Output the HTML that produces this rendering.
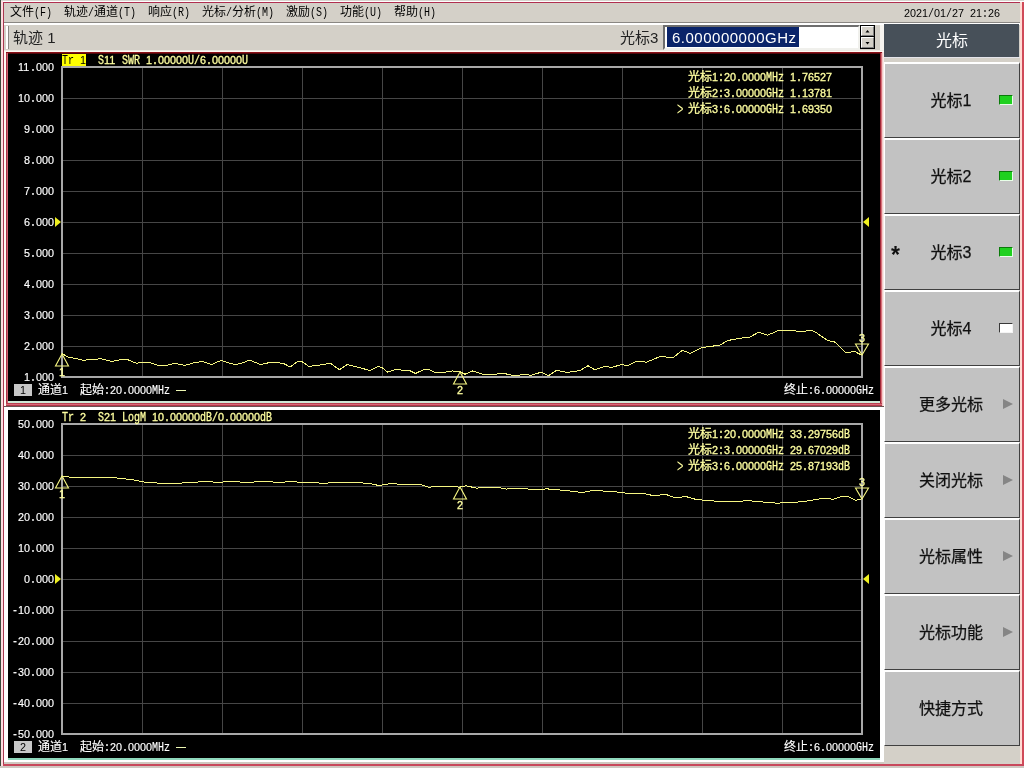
<!DOCTYPE html>
<html lang="zh-CN"><head><meta charset="utf-8"><title>光标</title>
<style>
html,body{margin:0;padding:0}
body{width:1024px;height:768px;overflow:hidden;background:#d4d0c8;position:relative;will-change:transform;font-family:"Liberation Sans","Noto Sans CJK SC",sans-serif}
.t{position:absolute;height:12px;line-height:12px;font-size:12px;white-space:pre;-webkit-text-stroke:.3px}
.t.k{-webkit-text-stroke:0}
.t.w{-webkit-text-stroke:.15px}
.t span{display:inline-block;position:relative;height:12px;line-height:12px;vertical-align:top;white-space:pre}
.t .c{font-family:"Liberation Sans","Noto Sans CJK SC",sans-serif;font-size:12px}
.t .l{font-family:"Liberation Mono","DejaVu Sans Mono",monospace;font-size:12px;transform:scaleX(.8333);transform-origin:0 0;top:1px}
.t .d{font-family:"Liberation Sans","DejaVu Sans",sans-serif;font-size:10.79px}
.btn{position:absolute;left:884px;width:136px;height:76px;background:#c2c2c2;box-sizing:border-box;border-top:2px solid #fff;border-left:1px solid #fff;border-bottom:1px solid #404040;border-right:1px solid #404040;font-size:16px;color:#101010;text-align:center;line-height:73px;padding-right:2px;-webkit-text-stroke:.25px}
.btn b{position:absolute;font-weight:normal}
.gt{position:absolute;width:7px;height:12px;line-height:12px;font-size:12px;font-family:"Liberation Sans",sans-serif;transform:scale(.9,1.5);transform-origin:0 50%}
.led{position:absolute;left:114px;top:31px;width:14px;height:10px;box-sizing:border-box;border:1px solid;border-color:#0a7a0a #e8ffe8 #e8ffe8 #0a7a0a;background:#1fd01f}
.arr{position:absolute;left:118px;top:31px;width:0;height:0;border-left:10px solid #858585;border-top:5px solid transparent;border-bottom:5px solid transparent}
</style></head><body>

<div style="position:absolute;left:0px;top:0px;width:1024px;height:1px;background:#d8d6d0;"></div>
<div style="position:absolute;left:0px;top:1px;width:1024px;height:1px;background:#fff;"></div>
<div style="position:absolute;left:0px;top:0px;width:1px;height:768px;background:#3a4a3a;"></div>
<div style="position:absolute;left:1px;top:1px;width:2px;height:767px;background:#ffdce0;"></div>
<div style="position:absolute;left:3px;top:2px;width:1px;height:764px;background:#a83850;"></div>
<div style="position:absolute;left:3px;top:2px;width:1019px;height:1px;background:#b03050;"></div>
<div style="position:absolute;left:1020px;top:2px;width:2px;height:764px;background:#ffdcd4;"></div>
<div style="position:absolute;left:1022px;top:2px;width:2px;height:766px;background:#d04a58;"></div>
<div style="position:absolute;left:3px;top:764px;width:1021px;height:2px;background:#c8485c;"></div>
<div style="position:absolute;left:0px;top:766px;width:1024px;height:2px;background:#cfc8c2;"></div>
<div class="t k" style="left:10px;top:6px;color:#000"><span class="c" style="width:24px">文件</span><span class="l" style="width:18px">(F)</span></div>
<div class="t k" style="left:64px;top:6px;color:#000"><span class="c" style="width:24px">轨迹</span><span class="l" style="width:6px">/</span><span class="c" style="width:24px">通道</span><span class="l" style="width:18px">(T)</span></div>
<div class="t k" style="left:148px;top:6px;color:#000"><span class="c" style="width:24px">响应</span><span class="l" style="width:18px">(R)</span></div>
<div class="t k" style="left:202px;top:6px;color:#000"><span class="c" style="width:24px">光标</span><span class="l" style="width:6px">/</span><span class="c" style="width:24px">分析</span><span class="l" style="width:18px">(M)</span></div>
<div class="t k" style="left:286px;top:6px;color:#000"><span class="c" style="width:24px">激励</span><span class="l" style="width:18px">(S)</span></div>
<div class="t k" style="left:340px;top:6px;color:#000"><span class="c" style="width:24px">功能</span><span class="l" style="width:18px">(U)</span></div>
<div class="t k" style="left:394px;top:6px;color:#000"><span class="c" style="width:24px">帮助</span><span class="l" style="width:18px">(H)</span></div>
<div class="t k" style="left:904px;top:7px;color:#000"><span class="d" style="width:24px">2021</span><span class="l" style="width:6px">/</span><span class="d" style="width:12px">01</span><span class="l" style="width:6px">/</span><span class="d" style="width:12px">27</span><span class="l" style="width:6px"> </span><span class="d" style="width:12px">21</span><span class="l" style="width:6px">:</span><span class="d" style="width:12px">26</span></div>
<div style="position:absolute;left:4px;top:22px;width:1016px;height:1px;background:#8a8783;"></div>
<div style="position:absolute;left:4px;top:23px;width:1016px;height:2px;background:#fff;"></div>
<div style="position:absolute;left:6px;top:26px;width:2px;height:23px;background:#fff;"></div>
<div style="position:absolute;left:8px;top:26px;width:1px;height:23px;background:#8a8783;"></div>
<div style="position:absolute;left:13px;top:28px;font-size:15px;line-height:20px;color:#222;white-space:nowrap">轨迹 1</div>
<div style="position:absolute;left:620px;top:28px;font-size:15px;line-height:20px;color:#222;white-space:nowrap">光标3</div>
<div style="position:absolute;left:663px;top:25px;width:197px;height:25px;box-sizing:border-box;background:#fff;border:2px solid;border-color:#6e6e6e #f0f0ec #f0f0ec #6e6e6e"></div>
<div style="position:absolute;left:667px;top:27px;width:132px;height:20px;background:#0a246a;color:#fff;font-size:15px;line-height:22px;letter-spacing:.5px;white-space:nowrap;text-indent:5px">6.000000000GHz</div>
<div style="position:absolute;left:860px;top:25px;width:15px;height:24px;background:#000;"></div>
<div style="position:absolute;left:861px;top:26px;width:13px;height:10px;background:#d4d0c8;box-sizing:border-box;border-top:1px solid #fff;border-left:1px solid #fff;border-right:1px solid #808080;border-bottom:1px solid #808080"></div>
<div style="position:absolute;left:861px;top:37px;width:13px;height:11px;background:#d4d0c8;box-sizing:border-box;border-top:1px solid #fff;border-left:1px solid #fff;border-right:1px solid #808080;border-bottom:1px solid #808080"></div>
<svg style="position:absolute;left:860px;top:25px" width="15" height="24"><polygon points="5.5,7.5 9.5,7.5 7.5,5" fill="#000"/><polygon points="5.5,17 9.5,17 7.5,19.5" fill="#000"/></svg>
<div style="position:absolute;left:880px;top:25px;width:4px;height:27px;background:#f6f4f0;"></div>
<div style="position:absolute;left:4px;top:50px;width:880px;height:1px;background:#ecebe4;"></div>
<div style="position:absolute;left:4px;top:51px;width:880px;height:356px;background:#fffaf4;"></div>
<div style="position:absolute;left:6px;top:52px;width:876px;height:354px;background:#c03a4c;"></div>
<div style="position:absolute;left:6px;top:52px;width:1px;height:354px;background:#a83848;"></div>
<div style="position:absolute;left:7px;top:52px;width:1px;height:354px;background:#d06070;"></div>
<div style="position:absolute;left:880px;top:52px;width:1px;height:354px;background:#a02838;"></div>
<div style="position:absolute;left:881px;top:52px;width:1px;height:354px;background:#d87078;"></div>
<div style="position:absolute;left:882px;top:52px;width:1px;height:354px;background:#f4c8c8;"></div>
<div style="position:absolute;left:883px;top:52px;width:1px;height:354px;background:#f8e8e4;"></div>
<div style="position:absolute;left:6px;top:52px;width:876px;height:1px;background:#8a1018;"></div>
<div style="position:absolute;left:8px;top:53px;width:872px;height:1px;background:#50080c;"></div>
<div style="position:absolute;left:8px;top:54px;width:872px;height:349px;background:#cfe8d6;"></div>
<div style="position:absolute;left:6px;top:403px;width:876px;height:1px;background:#b84050;"></div>
<div style="position:absolute;left:6px;top:404px;width:876px;height:1px;background:#d86878;"></div>
<div style="position:absolute;left:6px;top:405px;width:876px;height:1px;background:#b03848;"></div>
<div style="position:absolute;left:4px;top:406px;width:880px;height:1px;background:#6a5050;"></div>
<div style="position:absolute;left:4px;top:407px;width:880px;height:355px;background:#fff;"></div>
<div style="position:absolute;left:8px;top:410px;width:872px;height:350px;background:#8fd8bc;"></div>
<div style="position:absolute;left:4px;top:762px;width:880px;height:2px;background:#cfc8c0;"></div>
<div style="position:absolute;left:8px;top:54px;width:872px;height:347px;background:#000"></div>
<svg style="position:absolute;left:8px;top:54px" width="872" height="347" viewBox="8 54 872 347">
<rect x="142" y="67" width="1" height="310" fill="#464646"/>
<rect x="62" y="98" width="800" height="1" fill="#464646"/>
<rect x="222" y="67" width="1" height="310" fill="#464646"/>
<rect x="62" y="129" width="800" height="1" fill="#464646"/>
<rect x="302" y="67" width="1" height="310" fill="#464646"/>
<rect x="62" y="160" width="800" height="1" fill="#464646"/>
<rect x="382" y="67" width="1" height="310" fill="#464646"/>
<rect x="62" y="191" width="800" height="1" fill="#464646"/>
<rect x="462" y="67" width="1" height="310" fill="#464646"/>
<rect x="62" y="222" width="800" height="1" fill="#464646"/>
<rect x="542" y="67" width="1" height="310" fill="#464646"/>
<rect x="62" y="253" width="800" height="1" fill="#464646"/>
<rect x="622" y="67" width="1" height="310" fill="#464646"/>
<rect x="62" y="284" width="800" height="1" fill="#464646"/>
<rect x="702" y="67" width="1" height="310" fill="#464646"/>
<rect x="62" y="315" width="800" height="1" fill="#464646"/>
<rect x="782" y="67" width="1" height="310" fill="#464646"/>
<rect x="62" y="346" width="800" height="1" fill="#464646"/>
<rect x="62" y="67" width="800" height="310" fill="none" stroke="#a8a8a8" stroke-width="2"/>
<polyline points="62.2,353.7 69.0,357.7 75.4,358.2 83.0,360.3 91.9,359.5 100.8,358.8 112.2,361.5 119.8,359.8 126.2,359.0 136.3,363.3 142.7,362.0 150.3,362.6 159.2,365.9 166.8,365.4 174.4,363.3 184.6,365.4 194.7,362.6 202.4,361.5 211.3,364.6 221.4,360.3 227.8,362.6 235.4,364.6 241.7,363.3 249.3,360.0 253.1,361.5 260.8,364.6 268.4,362.8 278.5,362.6 284.9,364.1 290.0,367.1 297.6,361.5 302.5,362.0 308.9,366.4 317.8,365.4 330.5,363.3 339.4,369.7 347.0,364.6 354.6,366.4 369.8,370.4 378.7,366.4 382.5,367.9 387.6,372.2 395.2,369.7 409.2,370.4 415.5,373.5 424.4,369.2 429.5,369.7 435.9,373.0 444.7,372.2 452.4,370.9 460.0,371.7 465.0,374.2 472.7,370.9 482.8,374.2 493.0,374.8 501.9,373.0 515.8,376.0 523.5,374.2 531.0,375.3 541.2,372.2 548.3,375.7 556.6,370.4 566.6,372.4 579.8,370.7 588.1,365.7 594.8,369.7 604.7,366.4 611.4,367.4 621.3,364.7 628.0,365.4 636.3,361.4 646.5,362.1 661.1,356.2 672.8,358.0 682.2,350.3 690.4,353.4 702.1,347.5 719.7,345.2 727.9,340.5 740.8,338.1 750.1,337.0 758.4,332.3 767.7,335.1 778.3,330.6 790.0,330.4 801.7,331.6 811.1,330.2 815.8,332.3 827.5,340.5 834.5,341.8 846.2,353.0 854.4,351.2 861.5,355.2" fill="none" stroke="#f6f682" stroke-width="1" shape-rendering="crispEdges"/>
<polygon points="55,217 61,222 55,227" fill="#f0f020"/>
<polygon points="869,217 863,222 869,227" fill="#f0f020"/>
<polygon points="62,354 55.5,366 68.5,366" fill="none" stroke="#f6f682" stroke-width="1.1"/>
<polygon points="460,372 453.5,384 466.5,384" fill="none" stroke="#f6f682" stroke-width="1.1"/>
<polygon points="862,355 855.5,344 868.5,344" fill="none" stroke="#f6f682" stroke-width="1.1"/>
</svg>
<div class="t " style="left:59px;top:366px;color:#ffffa0"><span class="d" style="width:6px">1</span></div>
<div class="t " style="left:457px;top:384px;color:#ffffa0"><span class="d" style="width:6px">2</span></div>
<div class="t " style="left:859px;top:332px;color:#ffffa0"><span class="d" style="width:6px">3</span></div>
<div style="position:absolute;left:62px;top:54px;width:24px;height:12px;background:#ffff00;"></div>
<div class="t k" style="left:62px;top:54px;color:#000"><span class="l" style="width:18px">Tr </span><span class="d" style="width:6px">1</span></div>
<div class="t " style="left:98px;top:54px;color:#ffffa0"><span class="l" style="width:6px">S</span><span class="d" style="width:12px">11</span><span class="l" style="width:30px"> SWR </span><span class="d" style="width:6px">1</span><span class="l" style="width:6px">.</span><span class="d" style="width:30px">00000</span><span class="l" style="width:12px">U/</span><span class="d" style="width:6px">6</span><span class="l" style="width:6px">.</span><span class="d" style="width:30px">00000</span><span class="l" style="width:6px">U</span></div>
<div class="t w" style="left:18px;top:61px;color:#fff"><span class="d" style="width:12px">11</span><span class="l" style="width:6px">.</span><span class="d" style="width:18px">000</span></div>
<div class="t w" style="left:18px;top:92px;color:#fff"><span class="d" style="width:12px">10</span><span class="l" style="width:6px">.</span><span class="d" style="width:18px">000</span></div>
<div class="t w" style="left:24px;top:123px;color:#fff"><span class="d" style="width:6px">9</span><span class="l" style="width:6px">.</span><span class="d" style="width:18px">000</span></div>
<div class="t w" style="left:24px;top:154px;color:#fff"><span class="d" style="width:6px">8</span><span class="l" style="width:6px">.</span><span class="d" style="width:18px">000</span></div>
<div class="t w" style="left:24px;top:185px;color:#fff"><span class="d" style="width:6px">7</span><span class="l" style="width:6px">.</span><span class="d" style="width:18px">000</span></div>
<div class="t w" style="left:24px;top:216px;color:#fff"><span class="d" style="width:6px">6</span><span class="l" style="width:6px">.</span><span class="d" style="width:18px">000</span></div>
<div class="t w" style="left:24px;top:247px;color:#fff"><span class="d" style="width:6px">5</span><span class="l" style="width:6px">.</span><span class="d" style="width:18px">000</span></div>
<div class="t w" style="left:24px;top:278px;color:#fff"><span class="d" style="width:6px">4</span><span class="l" style="width:6px">.</span><span class="d" style="width:18px">000</span></div>
<div class="t w" style="left:24px;top:309px;color:#fff"><span class="d" style="width:6px">3</span><span class="l" style="width:6px">.</span><span class="d" style="width:18px">000</span></div>
<div class="t w" style="left:24px;top:340px;color:#fff"><span class="d" style="width:6px">2</span><span class="l" style="width:6px">.</span><span class="d" style="width:18px">000</span></div>
<div class="t w" style="left:24px;top:371px;color:#fff"><span class="d" style="width:6px">1</span><span class="l" style="width:6px">.</span><span class="d" style="width:18px">000</span></div>
<div class="t " style="left:688px;top:71px;color:#ffffa0"><span class="c" style="width:24px">光标</span><span class="d" style="width:6px">1</span><span class="l" style="width:6px">:</span><span class="d" style="width:12px">20</span><span class="l" style="width:6px">.</span><span class="d" style="width:24px">0000</span><span class="l" style="width:24px">MHz </span><span class="d" style="width:6px">1</span><span class="l" style="width:6px">.</span><span class="d" style="width:30px">76527</span></div>
<div class="t " style="left:688px;top:87px;color:#ffffa0"><span class="c" style="width:24px">光标</span><span class="d" style="width:6px">2</span><span class="l" style="width:6px">:</span><span class="d" style="width:6px">3</span><span class="l" style="width:6px">.</span><span class="d" style="width:30px">00000</span><span class="l" style="width:24px">GHz </span><span class="d" style="width:6px">1</span><span class="l" style="width:6px">.</span><span class="d" style="width:30px">13781</span></div>
<div class="gt" style="left:677px;top:103px;color:#ffffa0">&gt;</div>
<div class="t " style="left:688px;top:103px;color:#ffffa0"><span class="c" style="width:24px">光标</span><span class="d" style="width:6px">3</span><span class="l" style="width:6px">:</span><span class="d" style="width:6px">6</span><span class="l" style="width:6px">.</span><span class="d" style="width:30px">00000</span><span class="l" style="width:24px">GHz </span><span class="d" style="width:6px">1</span><span class="l" style="width:6px">.</span><span class="d" style="width:30px">69350</span></div>
<div style="position:absolute;left:14px;top:384px;width:18px;height:12px;background:#c8c8c8;"></div>
<div class="t k" style="left:20px;top:384px;color:#000"><span class="d" style="width:6px">1</span></div>
<div class="t w" style="left:38px;top:384px;color:#fff"><span class="c" style="width:24px">通道</span><span class="d" style="width:6px">1</span><span class="l" style="width:12px">  </span><span class="c" style="width:24px">起始</span><span class="l" style="width:6px">:</span><span class="d" style="width:12px">20</span><span class="l" style="width:6px">.</span><span class="d" style="width:24px">0000</span><span class="l" style="width:18px">MHz</span></div>
<div style="position:absolute;left:176px;top:390px;width:10px;height:1px;background:#eef8b4;"></div>
<div class="t w" style="left:784px;top:384px;color:#fff"><span class="c" style="width:24px">终止</span><span class="l" style="width:6px">:</span><span class="d" style="width:6px">6</span><span class="l" style="width:6px">.</span><span class="d" style="width:30px">00000</span><span class="l" style="width:18px">GHz</span></div>
<div style="position:absolute;left:8px;top:410px;width:872px;height:348px;background:#000"></div>
<svg style="position:absolute;left:8px;top:410px" width="872" height="348" viewBox="8 410 872 348">
<rect x="142" y="424" width="1" height="310" fill="#464646"/>
<rect x="62" y="455" width="800" height="1" fill="#464646"/>
<rect x="222" y="424" width="1" height="310" fill="#464646"/>
<rect x="62" y="486" width="800" height="1" fill="#464646"/>
<rect x="302" y="424" width="1" height="310" fill="#464646"/>
<rect x="62" y="517" width="800" height="1" fill="#464646"/>
<rect x="382" y="424" width="1" height="310" fill="#464646"/>
<rect x="62" y="548" width="800" height="1" fill="#464646"/>
<rect x="462" y="424" width="1" height="310" fill="#464646"/>
<rect x="62" y="579" width="800" height="1" fill="#464646"/>
<rect x="542" y="424" width="1" height="310" fill="#464646"/>
<rect x="62" y="610" width="800" height="1" fill="#464646"/>
<rect x="622" y="424" width="1" height="310" fill="#464646"/>
<rect x="62" y="641" width="800" height="1" fill="#464646"/>
<rect x="702" y="424" width="1" height="310" fill="#464646"/>
<rect x="62" y="672" width="800" height="1" fill="#464646"/>
<rect x="782" y="424" width="1" height="310" fill="#464646"/>
<rect x="62" y="703" width="800" height="1" fill="#464646"/>
<rect x="62" y="424" width="800" height="310" fill="none" stroke="#a8a8a8" stroke-width="2"/>
<polyline points="62.6,475.9 69.9,477.2 109.8,477.2 133.0,479.8 144.6,482.2 159.6,483.2 179.5,483.2 206.0,481.5 219.3,482.5 229.3,481.2 245.9,482.5 262.5,481.5 282.4,482.5 289.0,481.2 302.3,482.5 325.6,483.2 338.8,482.2 368.7,483.2 378.7,485.5 393.3,483.2 399.9,484.8 419.8,484.2 428.1,487.1 446.4,486.5 459.7,487.1 466.3,485.8 476.3,488.1 496.2,487.1 506.2,489.1 516.1,488.1 539.4,489.8 546.0,488.8 565.9,490.5 582.5,492.5 592.5,490.5 612.4,491.5 625.7,493.1 642.3,493.1 652.2,495.4 666.7,494.7 675.7,498.0 685.8,496.5 695.9,499.4 707.2,500.5 718.4,501.4 738.6,501.6 746.5,500.5 758.8,501.6 776.8,503.2 790.3,502.5 803.8,501.6 817.2,499.2 824.0,498.3 833.0,499.2 841.9,496.5 847.6,496.5 855.4,500.3 862.2,498.7" fill="none" stroke="#f6f682" stroke-width="1" shape-rendering="crispEdges"/>
<polygon points="55,574 61,579 55,584" fill="#f0f020"/>
<polygon points="869,574 863,579 869,584" fill="#f0f020"/>
<polygon points="62,476 55.5,488 68.5,488" fill="none" stroke="#f6f682" stroke-width="1.1"/>
<polygon points="460,487 453.5,499 466.5,499" fill="none" stroke="#f6f682" stroke-width="1.1"/>
<polygon points="862,499 855.5,488 868.5,488" fill="none" stroke="#f6f682" stroke-width="1.1"/>
</svg>
<div class="t " style="left:59px;top:488px;color:#ffffa0"><span class="d" style="width:6px">1</span></div>
<div class="t " style="left:457px;top:499px;color:#ffffa0"><span class="d" style="width:6px">2</span></div>
<div class="t " style="left:859px;top:476px;color:#ffffa0"><span class="d" style="width:6px">3</span></div>
<div class="t " style="left:62px;top:411px;color:#ffffa0"><span class="l" style="width:18px">Tr </span><span class="d" style="width:6px">2</span><span class="l" style="width:18px">  S</span><span class="d" style="width:12px">21</span><span class="l" style="width:36px"> LogM </span><span class="d" style="width:12px">10</span><span class="l" style="width:6px">.</span><span class="d" style="width:30px">00000</span><span class="l" style="width:18px">dB/</span><span class="d" style="width:6px">0</span><span class="l" style="width:6px">.</span><span class="d" style="width:30px">00000</span><span class="l" style="width:12px">dB</span></div>
<div class="t w" style="left:18px;top:418px;color:#fff"><span class="d" style="width:12px">50</span><span class="l" style="width:6px">.</span><span class="d" style="width:18px">000</span></div>
<div class="t w" style="left:18px;top:449px;color:#fff"><span class="d" style="width:12px">40</span><span class="l" style="width:6px">.</span><span class="d" style="width:18px">000</span></div>
<div class="t w" style="left:18px;top:480px;color:#fff"><span class="d" style="width:12px">30</span><span class="l" style="width:6px">.</span><span class="d" style="width:18px">000</span></div>
<div class="t w" style="left:18px;top:511px;color:#fff"><span class="d" style="width:12px">20</span><span class="l" style="width:6px">.</span><span class="d" style="width:18px">000</span></div>
<div class="t w" style="left:18px;top:542px;color:#fff"><span class="d" style="width:12px">10</span><span class="l" style="width:6px">.</span><span class="d" style="width:18px">000</span></div>
<div class="t w" style="left:24px;top:573px;color:#fff"><span class="d" style="width:6px">0</span><span class="l" style="width:6px">.</span><span class="d" style="width:18px">000</span></div>
<div class="t w" style="left:12px;top:604px;color:#fff"><span class="l" style="width:6px">-</span><span class="d" style="width:12px">10</span><span class="l" style="width:6px">.</span><span class="d" style="width:18px">000</span></div>
<div class="t w" style="left:12px;top:635px;color:#fff"><span class="l" style="width:6px">-</span><span class="d" style="width:12px">20</span><span class="l" style="width:6px">.</span><span class="d" style="width:18px">000</span></div>
<div class="t w" style="left:12px;top:666px;color:#fff"><span class="l" style="width:6px">-</span><span class="d" style="width:12px">30</span><span class="l" style="width:6px">.</span><span class="d" style="width:18px">000</span></div>
<div class="t w" style="left:12px;top:697px;color:#fff"><span class="l" style="width:6px">-</span><span class="d" style="width:12px">40</span><span class="l" style="width:6px">.</span><span class="d" style="width:18px">000</span></div>
<div class="t w" style="left:12px;top:728px;color:#fff"><span class="l" style="width:6px">-</span><span class="d" style="width:12px">50</span><span class="l" style="width:6px">.</span><span class="d" style="width:18px">000</span></div>
<div class="t " style="left:688px;top:428px;color:#ffffa0"><span class="c" style="width:24px">光标</span><span class="d" style="width:6px">1</span><span class="l" style="width:6px">:</span><span class="d" style="width:12px">20</span><span class="l" style="width:6px">.</span><span class="d" style="width:24px">0000</span><span class="l" style="width:24px">MHz </span><span class="d" style="width:12px">33</span><span class="l" style="width:6px">.</span><span class="d" style="width:30px">29756</span><span class="l" style="width:12px">dB</span></div>
<div class="t " style="left:688px;top:444px;color:#ffffa0"><span class="c" style="width:24px">光标</span><span class="d" style="width:6px">2</span><span class="l" style="width:6px">:</span><span class="d" style="width:6px">3</span><span class="l" style="width:6px">.</span><span class="d" style="width:30px">00000</span><span class="l" style="width:24px">GHz </span><span class="d" style="width:12px">29</span><span class="l" style="width:6px">.</span><span class="d" style="width:30px">67029</span><span class="l" style="width:12px">dB</span></div>
<div class="gt" style="left:677px;top:460px;color:#ffffa0">&gt;</div>
<div class="t " style="left:688px;top:460px;color:#ffffa0"><span class="c" style="width:24px">光标</span><span class="d" style="width:6px">3</span><span class="l" style="width:6px">:</span><span class="d" style="width:6px">6</span><span class="l" style="width:6px">.</span><span class="d" style="width:30px">00000</span><span class="l" style="width:24px">GHz </span><span class="d" style="width:12px">25</span><span class="l" style="width:6px">.</span><span class="d" style="width:30px">87193</span><span class="l" style="width:12px">dB</span></div>
<div style="position:absolute;left:14px;top:741px;width:18px;height:12px;background:#c8c8c8;"></div>
<div class="t k" style="left:20px;top:741px;color:#000"><span class="d" style="width:6px">2</span></div>
<div class="t w" style="left:38px;top:741px;color:#fff"><span class="c" style="width:24px">通道</span><span class="d" style="width:6px">1</span><span class="l" style="width:12px">  </span><span class="c" style="width:24px">起始</span><span class="l" style="width:6px">:</span><span class="d" style="width:12px">20</span><span class="l" style="width:6px">.</span><span class="d" style="width:24px">0000</span><span class="l" style="width:18px">MHz</span></div>
<div style="position:absolute;left:176px;top:747px;width:10px;height:1px;background:#eef8b4;"></div>
<div class="t w" style="left:784px;top:741px;color:#fff"><span class="c" style="width:24px">终止</span><span class="l" style="width:6px">:</span><span class="d" style="width:6px">6</span><span class="l" style="width:6px">.</span><span class="d" style="width:30px">00000</span><span class="l" style="width:18px">GHz</span></div>
<div style="position:absolute;left:884px;top:24px;width:135px;height:33px;background:#475059;"></div>
<div style="position:absolute;left:884px;top:24px;width:136px;height:34px;line-height:33px;text-align:center;color:#fff;font-size:16px">光标</div>
<div style="position:absolute;left:884px;top:57px;width:136px;height:1px;background:#e4e4ea;"></div>
<div class="btn" style="top:62px">光标1<i class="led"></i></div>
<div class="btn" style="top:138px">光标2<i class="led"></i></div>
<div class="btn" style="top:214px">光标3<i class="led"></i><b style="left:6px;top:3px;font-size:23px;font-weight:bold;-webkit-text-stroke:0">*</b></div>
<div class="btn" style="top:290px">光标4<i class="led" style="background:#fff;border-color:#383838 #f4f4f4 #f4f4f4 #383838"></i></div>
<div class="btn" style="top:366px">更多光标<i class="arr"></i></div>
<div class="btn" style="top:442px">关闭光标<i class="arr"></i></div>
<div class="btn" style="top:518px">光标属性<i class="arr"></i></div>
<div class="btn" style="top:594px">光标功能<i class="arr"></i></div>
<div class="btn" style="top:670px">快捷方式</div>
</body></html>
